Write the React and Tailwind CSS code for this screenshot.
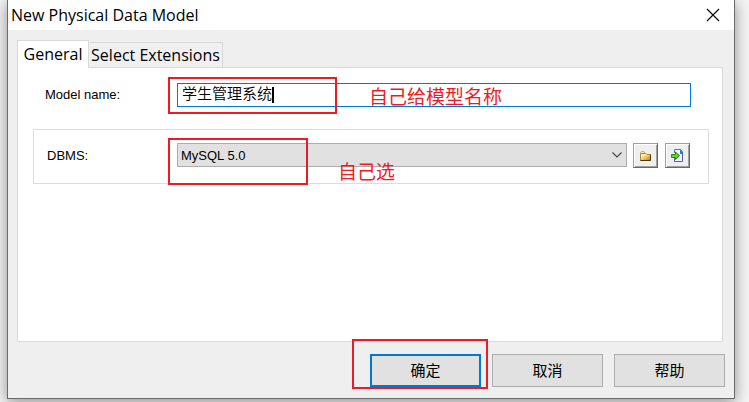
import { useState } from 'react'

function Callout({ className, children }) {
  return (
    <span className={`pointer-events-none absolute z-10 whitespace-nowrap text-[#ed1c24] ${className}`}>
      {children}
    </span>
  )
}

function FolderIcon() {
  return (
    <svg width="13" height="12" viewBox="0 0 13 12" aria-hidden="true">
      <defs>
        <linearGradient id="folder" x1="0" y1="0" x2="1" y2="1">
          <stop offset="0.2" stopColor="#fff0b8" />
          <stop offset="0.55" stopColor="#f0c455" />
          <stop offset="1" stopColor="#a87408" />
        </linearGradient>
      </defs>
      <path d="M1.5 3.5V2.5L2.5 1.5H5L6 3.5" fill="#f7e4a6" stroke="#c9ae6b" />
      <path d="M1.5 10V3.5H7L8 4.5H11.5V10.5H1.5Z" fill="url(#folder)" stroke="#a98a43" />
      <path d="M1.5 10.5H11.5V4.5" fill="none" stroke="#493816" />
    </svg>
  )
}

function ImportIcon() {
  return (
    <svg width="13" height="13" viewBox="0 0 13 13" aria-hidden="true">
      <path d="M3.5 0.5H9L11.5 3V12.5H3.5Z" fill="#f4f6ff" />
      <path d="M3.5 4V0.5H9" fill="none" stroke="#4c7eae" />
      <path d="M3.5 9V12.5H11.5V4" fill="none" stroke="#5b5aa5" />
      <path d="M8.5 0.5H9.5L11.5 3V4.5H9.5V2" fill="#3188d4" stroke="#1b75bd" />
      <path d="M0.5 5.5H4.5V3L8.5 6.5L4.5 10.5V8.5H0.5Z" fill="#62d229" stroke="#2b8b13" />
    </svg>
  )
}

function ToolButton({ label, children }) {
  return (
    <button
      type="button"
      aria-label={label}
      className="flex size-[25px] shrink-0 items-center justify-center border border-r-[#696969] border-b-[#696969] border-l-[#a0a0a0] border-t-[#a0a0a0] bg-[#efefef] shadow-[inset_1px_1px_0_#fff,inset_-1px_-1px_0_#a0a0a0]"
    >
      {children}
    </button>
  )
}

const dialogButton = 'h-[33px] w-[111px] bg-[#e1e1e1] pb-[2px] text-[15px] leading-5'

export default function App() {
  const [name, setName] = useState('学生管理系统')
  const [dbms, setDbms] = useState('MySQL 5.0')

  return (
    <div className="overflow-hidden bg-[#f4f4f4] pb-1 pl-[7px] pr-[14px] font-['Open_Sans','Noto_Sans_CJK_SC',sans-serif] text-black">
      <form
        role="dialog"
        aria-labelledby="dialog-title"
        onSubmit={(e) => e.preventDefault()}
        className="border border-t-0 border-[#6b6b6b] bg-[#efefef] shadow-[0_3px_14px_rgba(0,0,0,0.42)]"
      >
        <header className="flex h-[30px] items-center justify-between bg-white pl-[3px] pr-[14px]">
          <h1 id="dialog-title" className="text-base leading-7">New Physical Data Model</h1>
          <button type="button" aria-label="Close">
            <svg width="14" height="14" viewBox="0 0 14 14" aria-hidden="true">
              <path d="M1 1L13 13M13 1L1 13" stroke="#000" strokeWidth="1.1" />
            </svg>
          </button>
        </header>

        <div className="px-[9px] pb-[11px] pt-[10px]">
          <div className="mr-[2px]">
            <div role="tablist" className="flex items-end text-base">
              <button
                type="button"
                role="tab"
                aria-selected="true"
                className="relative -mb-px h-7 w-[72px] border border-b-0 border-[#d9d9d9] bg-white pb-[2px] leading-6"
              >
                General
              </button>
              <button
                type="button"
                role="tab"
                aria-selected="false"
                className="h-[25px] w-[134px] whitespace-nowrap border border-b-0 border-l-0 border-[#d9d9d9] bg-[#f0f0f0] leading-6"
              >
                Select Extensions
              </button>
            </div>

            <div role="tabpanel" className="min-h-[275px] border border-[#d9d9d9] bg-white pb-4 pl-[15px] pr-[13px] pt-[15px] font-['Liberation_Sans','Noto_Sans_CJK_SC',sans-serif] text-[13px]">
              <div className="flex items-center pl-3 pr-[18px]">
                <label htmlFor="model-name" className="w-[132px] shrink-0">Model name:</label>
                <div className="relative flex-1">
                  <input
                    id="model-name"
                    value={name}
                    onChange={(e) => setName(e.target.value)}
                    className="block h-6 w-full border border-[#0078d7] bg-white pb-[5px] pl-1 font-['Noto_Sans_CJK_SC',sans-serif] text-[15px] font-[350] outline-none"
                  />
                  <span className="pointer-events-none absolute left-[95px] top-1 h-4 w-[2px] bg-black" />
                  <Callout className="-left-[9px] -top-[6px] h-[37px] w-[169px] border-2 border-[#ed1c24]" />
                  <Callout className="left-[192px] top-px text-[19px] leading-7">自己给模型名称</Callout>
                </div>
              </div>

              <div className="mt-[22px] flex items-start border border-[#dcdcdc] pb-[14px] pl-[13px] pr-[18px] pt-[13px]">
                <label htmlFor="dbms" className="w-[130px] shrink-0 leading-[26px]">DBMS:</label>
                <div className="relative mr-[6px] flex-1">
                  <select
                    id="dbms"
                    value={dbms}
                    onChange={(e) => setDbms(e.target.value)}
                    className="block h-6 w-full appearance-none border border-[#adadad] bg-[#e1e1e1] pl-[3px] pt-[2px]"
                  >
                    <option>MySQL 5.0</option>
                  </select>
                  <svg className="pointer-events-none absolute right-[5px] top-2" width="10" height="8" viewBox="0 0 10 8" aria-hidden="true">
                    <path d="M0.5 1.5L5 6L9.5 1.5" fill="none" stroke="#444" strokeWidth="1.1" />
                  </svg>
                  <Callout className="-left-[9px] -top-[5px] h-[47px] w-[140px] border-2 border-[#ed1c24]" />
                  <Callout className="left-[161px] top-4 text-[19px] leading-7">自己选</Callout>
                </div>
                <div className="flex gap-[7px]">
                  <ToolButton label="Browse"><FolderIcon /></ToolButton>
                  <ToolButton label="Import"><ImportIcon /></ToolButton>
                </div>
              </div>
            </div>
          </div>

          <div className="mt-3 flex justify-end gap-[11px]">
            <div className="relative">
              <button type="submit" className={`${dialogButton} block border-2 border-[#0078d7]`}>确定</button>
              <Callout className="-left-[18px] -top-[15px] h-[50px] w-[136px] border-2 border-[#ed1c24]" />
            </div>
            <button type="button" className={`${dialogButton} border border-[#adadad]`}>取消</button>
            <button type="button" className={`${dialogButton} border border-[#adadad]`}>帮助</button>
          </div>
        </div>
      </form>
    </div>
  )
}
